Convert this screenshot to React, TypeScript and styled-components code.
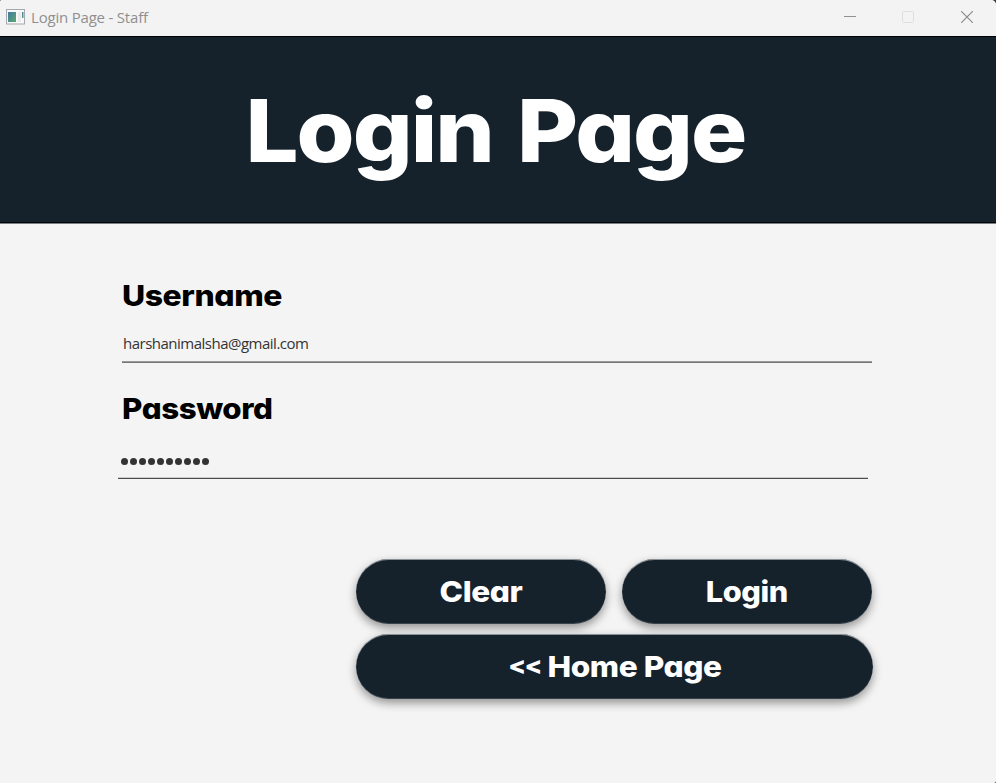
import React from "react";
import styled, { createGlobalStyle } from "styled-components";

const GlobalStyle = createGlobalStyle`
  *, *::before, *::after { box-sizing: border-box; }
  html, body { margin: 0; padding: 0; background: #3a3a3a; overflow: hidden; }
`;

const display = `
  font-family: Inter, "Liberation Sans", sans-serif;
  font-weight: 800;
  font-feature-settings: "cv11" 1, "calt" 0;
`;

const Window = styled.div`
  display: flex;
  flex-direction: column;
  width: 996px;
  height: 783px;
  background: #f4f4f4;
  border-radius: 2px 5px 2px 0;
  overflow: hidden;
`;

const TitleBar = styled.header`
  display: flex;
  align-items: center;
  flex: none;
  height: 36px;
  padding: 0 0 2px 6px;
  background: #f3f3f3;
`;

const Caption = styled.span`
  flex: 1;
  margin-left: 6px;
  font: 400 15px/20px "Open Sans", "Noto Sans", sans-serif;
  letter-spacing: -0.2px;
  color: #8f8f8f;
`;

const WindowButton = styled.button`
  display: flex;
  align-items: center;
  justify-content: center;
  width: 58px;
  height: 34px;
  padding: 0;
  border: 0;
  background: none;

  &:last-child { width: 59px; }
`;

const Banner = styled.div`
  flex: none;
  height: 188px;
  padding: 39px 5px 0 0;
  background: #15222c;
  border-top: 1px solid #000;
  border-bottom: 1px solid #7b7d7f;
  box-shadow: inset 0 -1px 0 #020507;
`;

const Heading = styled.h1`
  ${display}
  margin: 0;
  font-size: 87px;
  line-height: 110px;
  letter-spacing: -1.8px;
  word-spacing: 5px;
  text-align: center;
  white-space: nowrap;
  transform: scaleX(1.078);
  color: #fff;
`;

const Form = styled.form`
  display: flex;
  flex-direction: column;
  padding: 52px 123px 0 122px;
`;

const Label = styled.label<{ $stretch: number }>`
  ${display}
  align-self: flex-start;
  height: 40px;
  font-size: 29px;
  line-height: 40px;
  letter-spacing: -0.4px;
  transform: scaleX(${(p) => p.$stretch});
  transform-origin: 0 50%;
  color: #000;
`;

const Field = styled.div<{ $shift: number; $top: string; $bottom: string; $height: number }>`
  width: 750px;
  height: ${(p) => p.$height}px;
  margin-left: ${(p) => p.$shift}px;
  margin-bottom: 26px;
  padding: 17px 0 0 1px;
  border-bottom: 1px solid ${(p) => p.$bottom};
  box-shadow: inset 0 -1px 0 ${(p) => p.$top};
  font: 400 15px/20px "Open Sans", "Noto Sans", sans-serif;
  letter-spacing: -0.5px;
  color: #333;
`;

const Dots = styled.div`
  display: flex;
  gap: 2px;
  padding: 12px 0 0 1.7px;
`;

const Dot = styled.i`
  width: 7px;
  height: 7px;
  border-radius: 50%;
  background: #333;
`;

const Actions = styled.div`
  display: grid;
  grid-template-columns: 250px 250px;
  column-gap: 16px;
  row-gap: 10px;
  width: 517px;
  margin: 54px 0 0 234px;
`;

const Pill = styled.button<{ $wide?: boolean }>`
  display: flex;
  align-items: center;
  justify-content: center;
  grid-column: ${(p) => (p.$wide ? "1 / -1" : "auto")};
  width: ${(p) => (p.$wide ? 517 : 250)}px;
  height: 65px;
  padding: 0;
  border: 0;
  border-radius: 32.5px;
  background: #15222c;
  box-shadow: 0 4px 10px rgba(0, 0, 0, 0.4), inset 0 1px 0 rgba(255, 255, 255, 0.5), inset 0 -1px 0 rgba(255, 255, 255, 0.15);
`;

const PillText = styled.span<{ $stretch: number }>`
  ${display}
  font-size: 29px;
  line-height: 65px;
  letter-spacing: -0.4px;
  white-space: nowrap;
  color: #fff;
  transform: scaleX(${(p) => p.$stretch});
`;

const Chevrons = styled.span`
  font-size: 24px;
  line-height: 1;
  letter-spacing: -1.4px;
  vertical-align: 3.5px;
`;

const AppIcon = () => (
  <svg width="19" height="16" viewBox="0 0 19 16">
    <defs>
      <linearGradient id="pane" x1="0" y1="0" x2="1" y2="1">
        <stop offset="0" stopColor="#4779a0" />
        <stop offset="1" stopColor="#55aa70" />
      </linearGradient>
    </defs>
    <rect x="0.5" y="0.5" width="18" height="14.5" fill="#f8f8f8" stroke="#a5a8b0" />
    <rect x="2" y="3" width="8" height="10" fill="url(#pane)" />
    <rect x="12" y="3" width="3" height="10" fill="#eaeaea" />
    <rect x="16" y="3" width="1.5" height="6" fill="url(#pane)" />
  </svg>
);

export default function App() {
  return (
    <>
      <GlobalStyle />
      <Window>
        <TitleBar>
          <AppIcon />
          <Caption>Login Page - Staff</Caption>
          <WindowButton aria-label="Minimize">
            <svg width="12" height="12"><path d="M0 5.5H12" stroke="#919191" /></svg>
          </WindowButton>
          <WindowButton aria-label="Maximize">
            <svg width="12" height="12"><rect x=".5" y=".5" width="11" height="11" rx="1" fill="none" stroke="#dedede" /></svg>
          </WindowButton>
          <WindowButton aria-label="Close">
            <svg width="12" height="12"><path d="M0 0L12 12M12 0L0 12" stroke="#8c8c8c" strokeWidth="1.2" /></svg>
          </WindowButton>
        </TitleBar>
        <Banner>
          <Heading>Login Page</Heading>
        </Banner>
        <Form>
          <Label $stretch={1.1}>Username</Label>
          <Field $shift={0} $height={47} $top="#999" $bottom="#777">harshanimalsha@gmail.com</Field>
          <Label $stretch={1.078}>Password</Label>
          <Field $shift={-4} $height={50} $top="#ccc" $bottom="#4d4d4d">
            <Dots>{Array.from({ length: 10 }, (_, i) => <Dot key={i} />)}</Dots>
          </Field>
          <Actions>
            <Pill type="button"><PillText $stretch={1.09}>Clear</PillText></Pill>
            <Pill type="button"><PillText $stretch={1.06}>Login</PillText></Pill>
            <Pill type="button" $wide>
              <PillText $stretch={1.09}><Chevrons>&lt;&lt;</Chevrons> Home Page</PillText>
            </Pill>
          </Actions>
        </Form>
      </Window>
    </>
  );
}
